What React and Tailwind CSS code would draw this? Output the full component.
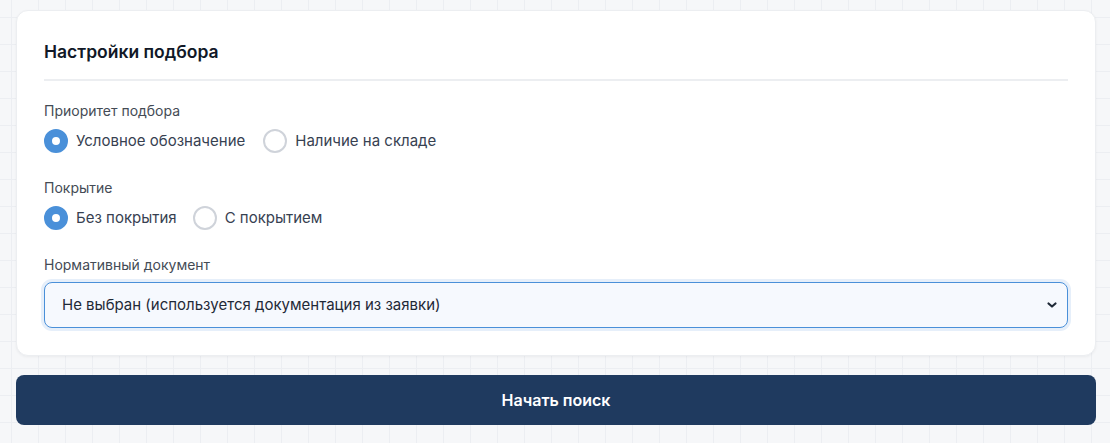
import React, { useState } from 'react'

const Radio = ({ label, checked, onChange }) => (
  <label className="flex items-center gap-2 cursor-pointer" onClick={onChange}>
    <span
      className={
        checked
          ? 'w-6 h-6 rounded-full border-[8px] border-[#4a90d9] bg-white shrink-0'
          : 'w-6 h-6 rounded-full border-2 border-[#cfd3da] bg-white shrink-0'
      }
    />
    <span className="text-[15px] leading-6 text-[#374151]">{label}</span>
  </label>
)

const App = () => {
  const [priority, setPriority] = useState('mark')
  const [coating, setCoating] = useState('none')

  return (
    <div
      className="min-h-[443px] bg-[#f6f7f9] pl-4 pr-[14px] pt-[10px] pb-4"
      style={{
        fontFamily: 'Inter, "Noto Sans", sans-serif',
        backgroundImage:
          'linear-gradient(to right, #eceef2 1px, transparent 1px), linear-gradient(to bottom, #eceef2 1px, transparent 1px)',
        backgroundSize: '27px 27px',
        backgroundPosition: '11px 17px',
      }}
    >
      <div className="bg-white rounded-xl border border-[#eceef1] shadow-[0_1px_3px_rgba(0,0,0,0.05)] p-[27px]">
        <h2 className="text-[17.5px] leading-7 font-semibold text-[#111827] pb-[13px] border-b-2 border-[#eceef1]">
          Настройки подбора
        </h2>

        <div className="mt-5">
          <div className="text-sm leading-5 text-[#444b55] mb-2">Приоритет подбора</div>
          <div className="flex items-center gap-[18px]">
            <Radio label="Условное обозначение" checked={priority === 'mark'} onChange={() => setPriority('mark')} />
            <Radio label="Наличие на складе" checked={priority === 'stock'} onChange={() => setPriority('stock')} />
          </div>
        </div>

        <div className="mt-[25px]">
          <div className="text-sm leading-5 text-[#444b55] mb-2">Покрытие</div>
          <div className="flex items-center gap-[16px]">
            <Radio label="Без покрытия" checked={coating === 'none'} onChange={() => setCoating('none')} />
            <Radio label="С покрытием" checked={coating === 'coated'} onChange={() => setCoating('coated')} />
          </div>
        </div>

        <div className="mt-[25px]">
          <div className="text-sm leading-5 text-[#444b55] mb-[7px]">Нормативный документ</div>
          <div className="relative">
            <select className="w-full h-[46px] appearance-none rounded-lg border border-[#4a90d9] bg-[#f6f9fe] pl-[17px] pr-10 text-[15px] text-[#1f2937] outline-none shadow-[0_0_0_3px_#e6effa]">
              <option>Не выбран (используется документация из заявки)</option>
            </select>
            <svg
              className="absolute right-[8px] top-1/2 -translate-y-1/2 pointer-events-none"
              width="16"
              height="16"
              viewBox="0 0 16 16"
              fill="none"
            >
              <path d="M4.5 6.5L8 9.5L11.5 6.5" stroke="#1f2937" strokeWidth="2.2" strokeLinecap="round" strokeLinejoin="round" />
            </svg>
          </div>
        </div>
      </div>

      <button className="mt-[19px] w-full h-[50px] rounded-lg bg-[#1f3a5f] text-white text-base font-semibold">
        Начать поиск
      </button>
    </div>
  )
}

export default App
